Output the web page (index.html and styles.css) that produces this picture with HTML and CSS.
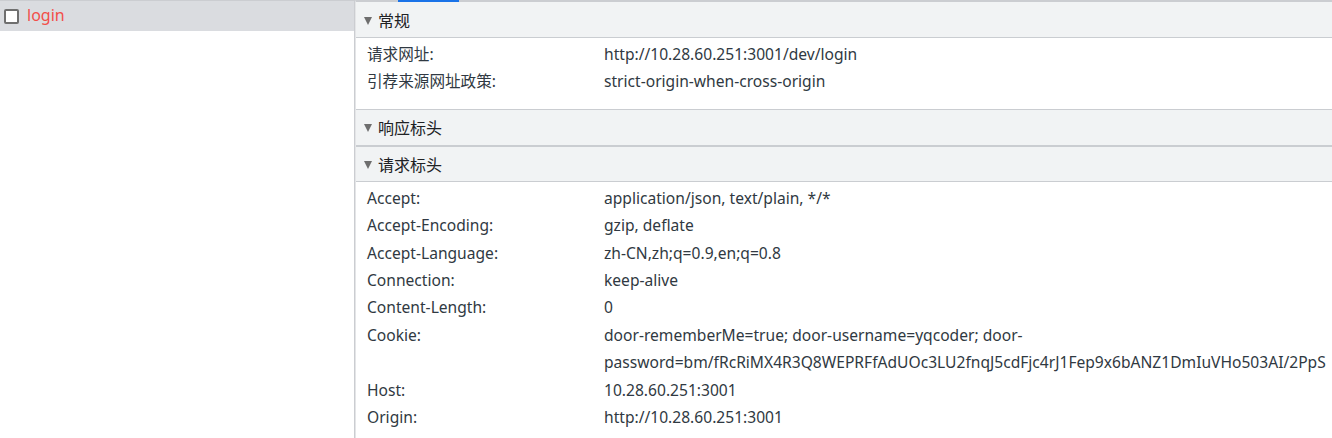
FILE: index.html
```html
<!DOCTYPE html>
<html lang="zh-CN">
<head>
<meta charset="utf-8">
<title>Network</title>
<link rel="stylesheet" href="styles.css">
</head>
<body>
<div class="app">
  <aside class="sidebar">
    <div class="req-row">
      <span class="req-check"></span>
      <span class="req-name">login</span>
    </div>
  </aside>
  <main class="main">
    <div class="tab-indicator"></div>
    <section class="section section-general">
      <div class="section-head"><span class="tri"></span>常规</div>
      <div class="rows rows-general">
        <div class="row"><span class="key">请求网址:</span><span class="val">http://10.28.60.251:3001/dev/login</span></div>
        <div class="row"><span class="key">引荐来源网址政策:</span><span class="val">strict-origin-when-cross-origin</span></div>
      </div>
    </section>
    <section class="section section-resp">
      <div class="section-head"><span class="tri"></span>响应标头</div>
    </section>
    <section class="section section-req">
      <div class="section-head"><span class="tri"></span>请求标头</div>
      <div class="rows rows-req">
        <div class="row"><span class="key">Accept:</span><span class="val">application/json, text/plain, */*</span></div>
        <div class="row"><span class="key">Accept-Encoding:</span><span class="val">gzip, deflate</span></div>
        <div class="row"><span class="key">Accept-Language:</span><span class="val">zh-CN,zh;q=0.9,en;q=0.8</span></div>
        <div class="row"><span class="key">Connection:</span><span class="val">keep-alive</span></div>
        <div class="row"><span class="key">Content-Length:</span><span class="val">0</span></div>
        <div class="row"><span class="key">Cookie:</span><span class="val">door-rememberMe=true; door-username=yqcoder; door-password=bm/fRcRiMX4R3Q8WEPRFfAdUOc3LU2fnqJ5cdFjc4rJ1Fep9x6bANZ1DmIuVHo503AI/2PpS</span></div>
        <div class="row"><span class="key">Host:</span><span class="val">10.28.60.251:3001</span></div>
        <div class="row"><span class="key">Origin:</span><span class="val">http://10.28.60.251:3001</span></div>
      </div>
    </section>
  </main>
</div>
</body>
</html>
```
FILE: styles.css
```css
html, body {
  margin: 0;
  padding: 0;
  height: 100%;
  overflow: hidden;
  background: #ffffff;
}

body {
  font-family: "Noto Sans", "Noto Sans CJK SC", sans-serif;
  font-size: 15.6px;
  color: #303942;
}

.app {
  display: flex;
  height: 100%;
}

.sidebar {
  width: 354px;
  flex: none;
  border-top: 1px solid #cbcdd1;
  border-right: 1px solid #cbcdd1;
}

.req-row {
  height: 30px;
  background: #dadce0;
  display: flex;
  align-items: center;
  padding-left: 4px;
  gap: 8px;
}

.req-check {
  width: 11px;
  height: 11px;
  border: 2px solid #6f6f6f;
  border-radius: 2px;
  background: #ffffff;
}

.req-name {
  color: #f24e4a;
  font-size: 16px;
  line-height: 1;
  margin-top: -3px;
}

.main {
  flex: 1;
  min-width: 0;
  position: relative;
  border-top: 2px solid #cbcdd1;
  border-left: 1px solid #e4e5e7;
}

.tab-indicator {
  position: absolute;
  top: -2px;
  left: 42px;
  width: 61px;
  height: 2px;
  background: #1a73e8;
}

.section-head {
  height: 35px;
  background: #f1f3f4;
  border-bottom: 1px solid #cacdd1;
  display: flex;
  align-items: center;
  padding-left: 8px;
  font-family: "Noto Sans CJK SC", sans-serif;
  font-size: 16px;
  color: #202124;
}

.section-resp .section-head {
  border-top: 1px solid #cacdd1;
  border-bottom: 2px solid #cacdd1;
  height: 35px;
}

.section-req .section-head {
  height: 34px;
}

.tri {
  width: 0;
  height: 0;
  border-left: 4.5px solid transparent;
  border-right: 4.5px solid transparent;
  border-top: 8px solid #6e6e6e;
  margin-right: 6px;
  margin-top: 2px;
}

.rows {
  padding-left: 11px;
}

.rows-general {
  padding-top: 3px;
  padding-bottom: 13px;
}

.rows-req {
  padding-top: 3px;
}

.row {
  display: flex;
  line-height: 27.4px;
}

.key {
  width: 237px;
  flex: none;
}

.val {
  flex: 1;
  min-width: 0;
}
```
